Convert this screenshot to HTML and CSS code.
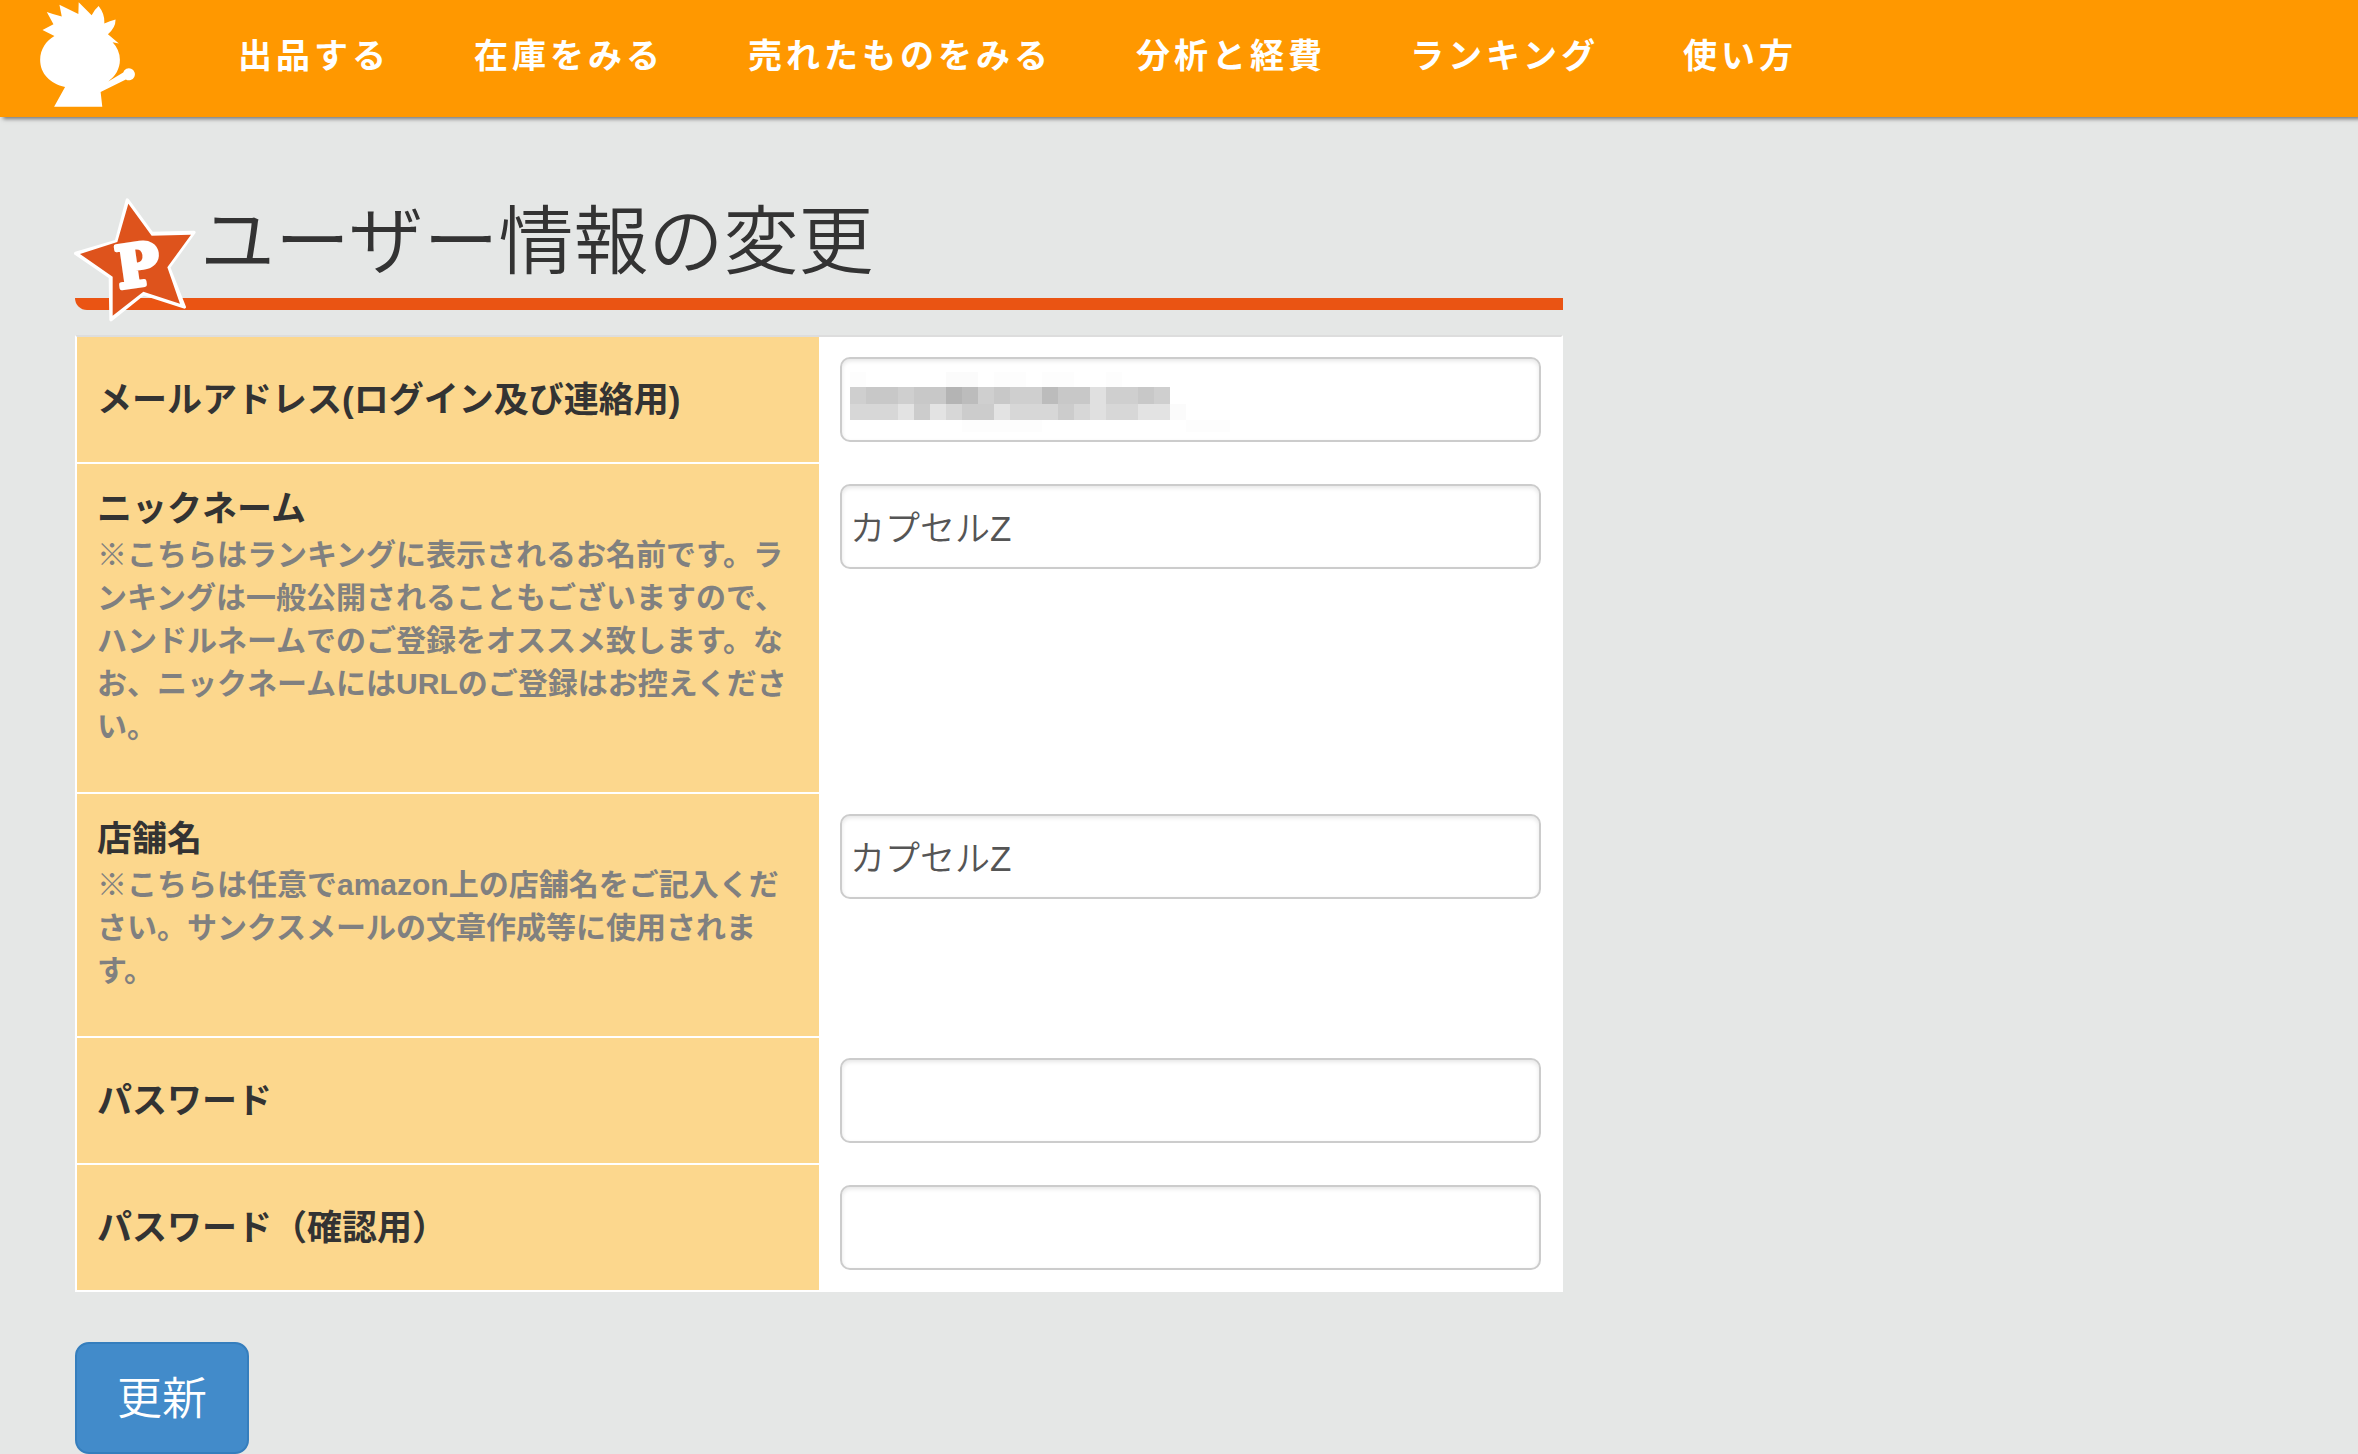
FILE: index.html
```html
<!DOCTYPE html>
<html lang="ja">
<head>
<meta charset="utf-8">
<title>ユーザー情報の変更</title>
<link rel="stylesheet" href="styles.css">
</head>
<body>
<header class="site-header">
  <a class="logo" href="#" aria-label="ホーム">
    <svg viewBox="120 6 288 316" width="96" height="105" aria-hidden="true">
      <path fill="#fff" d="M163 108L127 90L160 73L140 36Q160 43 185 50L178 14L235 42L236 7L275 46Q284 28 296 18Q315 42 313 71Q330 63 347 59Q347 84 324 103L357 131L338 127Q360 150 360 180C360 208 346 230 325 245L370 218A18 18 0 1 1 378 239L302 277L307 321H162L195 262C150 252 120 222 120 180C120 148 138 122 163 108Z"/>
    </svg>
  </a>
  <nav class="main-nav">
    <a href="#">出品する</a>
    <a href="#">在庫をみる</a>
    <a href="#">売れたものをみる</a>
    <a href="#">分析と経費</a>
    <a href="#">ランキング</a>
    <a href="#">使い方</a>
  </nav>
</header>
<main class="page">
  <div class="content">
    <h1 class="page-title">
      <svg class="star" viewBox="42 54 366 372" width="122" height="124" aria-hidden="true">
        <path class="star-edge" d="M202 60L275 160L402 157L326 262L373 381L250 341L153 419L151 291L47 220L169 184Z"/>
        <path class="star-face" d="M205 71L275 167L393 164L322 262L360 371L250 335L158 407L158 290L60 222L172 186Z"/>
        <text class="star-letter" x="178" y="323" transform="rotate(-8 190 326)">P</text>
      </svg>
      ユーザー情報の変更
    </h1>
    <form>
      <table class="form-table">
        <tr>
          <th><label for="mail">メールアドレス(ログイン及び連絡用)</label></th>
          <td>
            <div class="masked">
              <input class="field" type="email" id="mail">
              <svg class="mosaic" viewBox="0 0 384 60" width="384" height="60" shape-rendering="crispEdges" aria-hidden="true">
                <path fill="#fbfbfb" d="M96 0h32v15h-32zM320 32h16v16h-16z"/>
                <path fill="#fdfdfd" d="M0 0h16v15H0zM144 0h32v15h-32zM192 0h32v15h-32zM256 0h16v15h-16zM112 48h80v12h-80zM336 48h44v12h-44z"/>
                <path fill="#cfcfcf" d="M0 15h320v17H0z"/>
                <path fill="#c8c8c8" d="M16 15h32v17H16zM64 15h32v17H64zM144 15h16v17h-16zM208 15h32v17h-32zM288 15h16v17h-16z"/>
                <path fill="#b4b4b4" d="M96 15h16v17H96z"/>
                <path fill="#bcbcbc" d="M112 15h16v17h-16zM192 15h16v17h-16z"/>
                <path fill="#d7d7d7" d="M0 32h240v16H0zM256 32h32v16h-32z"/>
                <path fill="#e0e0e0" d="M240 15h16v33h-16z"/>
                <path fill="#cccccc" d="M64 32h16v16H64zM112 32h32v16h-32zM208 32h16v16h-16z"/>
                <path fill="#e3e3e3" d="M48 32h16v16H48zM80 32h16v16H80zM144 32h16v16h-16zM288 32h32v16h-32z"/>
              </svg>
            </div>
          </td>
        </tr>
        <tr>
          <th>
            <label for="nick">ニックネーム</label>
            <p class="note">※こちらはランキングに表示されるお名前です。ランキングは一般公開されることもございますので、ハンドルネームでのご登録をオススメ致します。なお、ニックネームにはURLのご登録はお控えください。</p>
          </th>
          <td><input class="field" type="text" id="nick" value="カプセルZ"></td>
        </tr>
        <tr>
          <th>
            <label for="shop">店舗名</label>
            <p class="note">※こちらは任意でamazon上の店舗名をご記入ください。サンクスメールの文章作成等に使用されます。</p>
          </th>
          <td><input class="field" type="text" id="shop" value="カプセルZ"></td>
        </tr>
        <tr>
          <th><label for="pass">パスワード</label></th>
          <td><input class="field" type="password" id="pass"></td>
        </tr>
        <tr>
          <th><label for="pass2">パスワード（確認用）</label></th>
          <td><input class="field" type="password" id="pass2"></td>
        </tr>
      </table>
      <button class="submit" type="submit">更新</button>
    </form>
  </div>
</main>
</body>
</html>
```
FILE: styles.css
```css
* {
  box-sizing: border-box;
}

body {
  margin: 0;
  background: #e5e7e6;
  color: #333;
  font-family: "Liberation Sans", "Noto Sans CJK JP", sans-serif;
  font-size: 35px;
  line-height: 49px;
}

.site-header {
  display: flex;
  align-items: flex-start;
  height: 117px;
  padding: 2px 40px 0;
  background: #ff9800;
  box-shadow: 3px 2px 4px #777;
}

.logo {
  display: block;
  line-height: 0;
}

.main-nav {
  display: flex;
  gap: 84px;
  padding: 30px 0 0 102px;
  font-size: 34px;
}

.main-nav a {
  color: #fff;
  font-weight: bold;
  letter-spacing: 4px;
  text-decoration: none;
  white-space: nowrap;
}

.page {
  display: grid;
  grid-template-columns: 62fr 30fr;
  padding: 81px 75px 0;
}

.page-title {
  position: relative;
  margin: 0 0 25px;
  padding: 3px 0 15px 125px;
  border-bottom: 12px solid #ea5413;
  border-bottom-left-radius: 12px;
  font-size: 75px;
  font-weight: 350;
  line-height: 82px;
}

.star {
  position: absolute;
  top: 0;
  left: -1px;
}

.star-edge {
  fill: #fff;
  stroke: #fff;
  stroke-width: 10;
  stroke-linejoin: round;
}

.star-face {
  fill: #de531c;
}

.star-letter {
  fill: #fff;
  stroke: #fff;
  stroke-width: 14;
  stroke-linejoin: round;
  font: bold 172px "DejaVu Serif", serif;
}

.form-table {
  width: 100%;
  border-spacing: 0;
  table-layout: fixed;
  background: #fff;
}

.form-table th,
.form-table td {
  padding: 20px;
  border: 0 solid #fff;
  border-top-width: 2px;
}

.form-table tr:first-child > * {
  border-top-color: #ddd;
}

.form-table tr:last-child > * {
  border-bottom-width: 2px;
}

.form-table th {
  border-left-width: 2px;
  background: #fcd78d;
  background-clip: padding-box;
  text-align: left;
  vertical-align: middle;
}

.form-table td {
  padding-left: 21px;
  border-right-width: 2px;
  vertical-align: top;
}

.form-table label {
  display: block;
}

.form-table th:first-child {
  width: 50%;
}

.note {
  margin: 0 0 24px;
  color: #808080;
  font-size: 30px;
  line-height: 43px;
}

.masked {
  position: relative;
}

.mosaic {
  position: absolute;
  top: 15px;
  left: 10px;
}

.field {
  display: block;
  width: 100%;
  height: 85px;
  padding: 0 8px 2px;
  border: 2px solid #ccc;
  border-radius: 10px;
  background: #fff;
  box-shadow: inset 0 2px 4px rgba(0, 0, 0, 0.1);
  color: #555;
  font: inherit;
  font-weight: 350;
}

.submit {
  display: block;
  height: 112px;
  margin-top: 50px;
  padding: 2px 40px 0;
  border: 2px solid #357ebd;
  border-radius: 14px;
  background: #428bca;
  color: #fff;
  font: inherit;
  font-size: 45px;
  font-weight: 350;
}
```
